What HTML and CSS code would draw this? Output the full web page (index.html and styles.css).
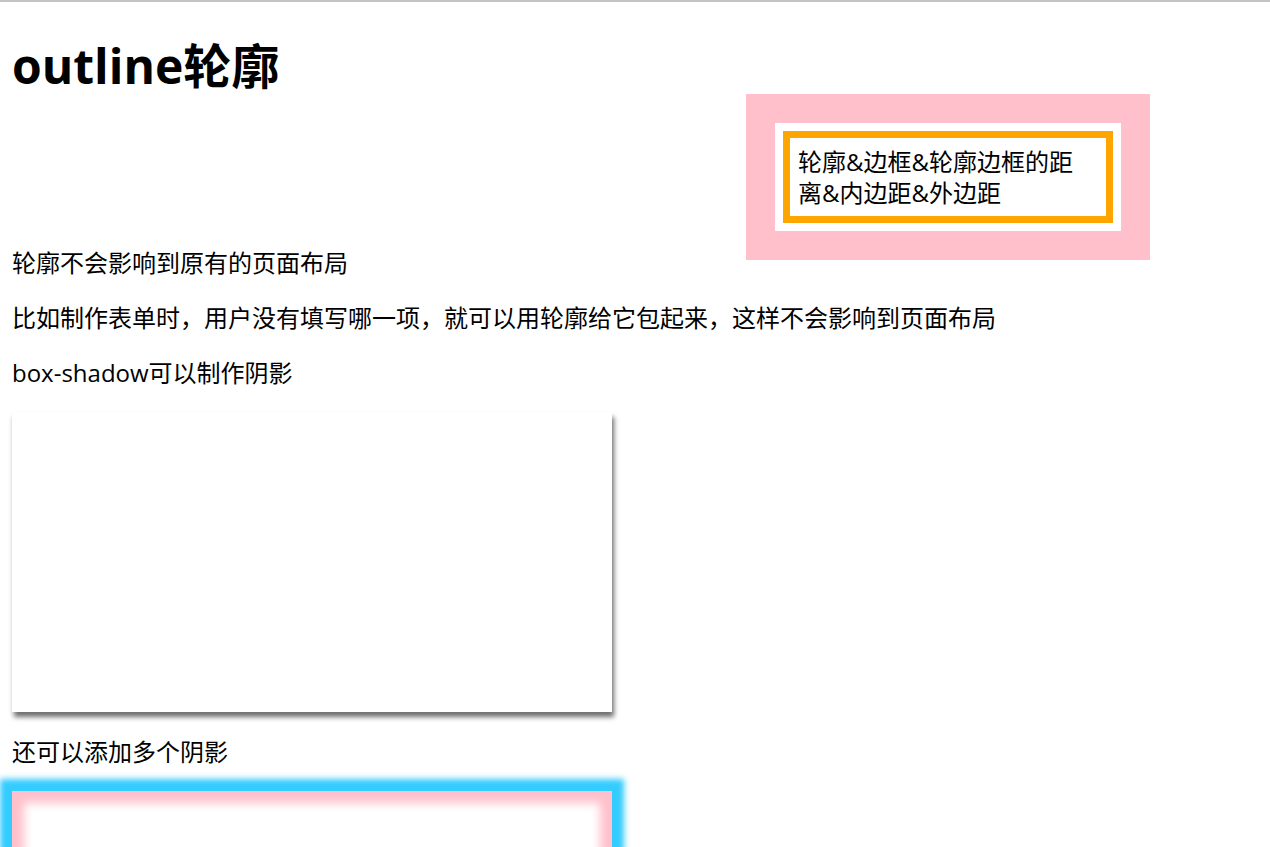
FILE: index.html
```html
<!DOCTYPE html>
<html lang="zh">
<head>
<meta charset="utf-8">
<title>outline轮廓</title>
<link rel="stylesheet" href="styles.css">
</head>
<body>
<h1 class="title">outline轮廓</h1>
<div class="outline-box">轮廓&amp;边框&amp;轮廓边框的距<br>离&amp;内边距&amp;外边距</div>
<p class="text">轮廓不会影响到原有的页面布局</p>
<p class="text">比如制作表单时，用户没有填写哪一项，就可以用轮廓给它包起来，这样不会影响到页面布局</p>
<p class="text">box-shadow可以制作阴影</p>
<div class="shadow-box"></div>
<p class="text">还可以添加多个阴影</p>
<div class="multi-shadow-box"></div>
</body>
</html>
```

FILE: styles.css
```css
html {
  border-top: 2px solid #c4c4c4;
  background: #fff;
}
body {
  margin: 0;
  padding: 0 12px;
  font-family: "Open Sans", "Noto Sans CJK SC", sans-serif;
  color: #000;
  overflow: hidden;
}
.title {
  margin: 32px 0 34px;
  font-size: 48px;
  line-height: 63px;
  font-weight: 700;
}
.outline-box {
  width: 300px;
  margin-left: 771px;
  padding: 8px;
  border: 7px solid #ffa500;
  outline: 29px solid #ffc0cb;
  outline-offset: 8px;
  font-size: 24px;
  line-height: 31px;
}
.text {
  margin: 24px 0;
  font-size: 24px;
  line-height: 31px;
}
.shadow-box {
  width: 600px;
  height: 300px;
  background: #fff;
  box-shadow: 2px 5px 5px #6e6e6e;
}
.multi-shadow-box {
  width: 600px;
  height: 300px;
  background: #fff;
  box-shadow: 0 0 6px 12px #33ccff, inset 0 0 10px 12px #ffc0cb;
}
```
